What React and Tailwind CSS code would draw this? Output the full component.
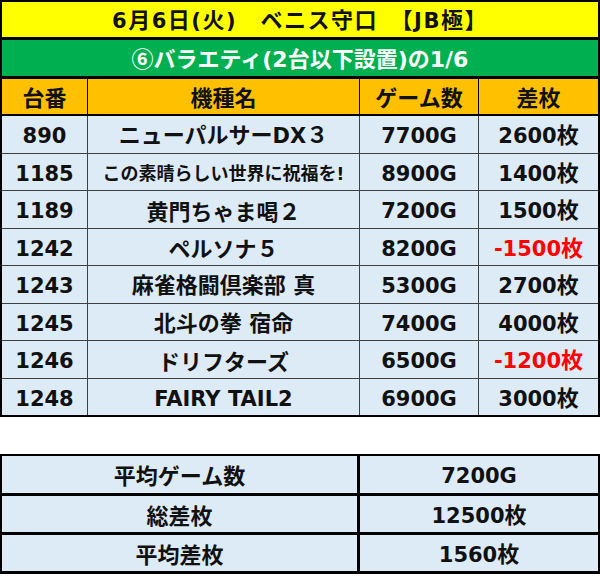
import React from 'react';

const rows = [
  { no: '890', name: 'ニューパルサーDX３', games: '7700G', diff: '2600枚' },
  { no: '1185', name: 'この素晴らしい世界に祝福を!', games: '8900G', diff: '1400枚', small: true },
  { no: '1189', name: '黄門ちゃま喝２', games: '7200G', diff: '1500枚' },
  { no: '1242', name: 'ペルソナ５', games: '8200G', diff: '-1500枚', minus: true },
  { no: '1243', name: '麻雀格闘倶楽部 真', games: '5300G', diff: '2700枚' },
  { no: '1245', name: '北斗の拳 宿命', games: '7400G', diff: '4000枚' },
  { no: '1246', name: 'ドリフターズ', games: '6500G', diff: '-1200枚', minus: true },
  { no: '1248', name: 'FAIRY TAIL2', games: '6900G', diff: '3000枚' },
];

const summary = [
  { label: '平均ゲーム数', value: '7200G' },
  { label: '総差枚', value: '12500枚' },
  { label: '平均差枚', value: '1560枚' },
];

// latin runs get a Verdana-like face, the rest stays on the CJK font
function Mixed({ text, latin = 'text-[21px]' }) {
  const parts = text.split(/([\x20-\x7e]+)/).filter(Boolean);
  return (
    <span className="leading-none">
      {parts.map((p, i) =>
        /^[\x20-\x7e]+$/.test(p) ? (
          <span key={i} className={`${latin} font-[family-name:"DejaVu_Sans",sans-serif]`}>{p}</span>
        ) : (
          <span key={i}>{p}</span>
        )
      )}
    </span>
  );
}

export default function App() {
  return (
    <div className='w-[600px] h-[576px] bg-white font-bold text-[22px] text-[#111] font-[family-name:"Noto_Sans_CJK_JP",sans-serif]'>
      {/* main table */}
      <div className="w-[600px] border-x-2 border-t-2 border-b-2 border-black">
        <div className="h-[35px] bg-[#ffff00] flex items-center justify-center whitespace-pre tracking-[1.5px]">
          <Mixed text="6月6日(火)　ベニス守口　【JB極】" />
        </div>
        <div className="h-[3px] bg-black" />
        <div className="h-[36px] bg-[#00b050] flex items-center justify-center text-white">
          <Mixed text="⑥バラエティ(2台以下設置)の1/6" latin="text-[22px]" />
        </div>
        <div className="h-[3px] bg-black" />
        <div className="h-[35px] grid grid-cols-[85px_271px_118px_1fr] gap-x-px bg-black">
          <div className="bg-[#ffc000] flex items-center justify-center">台番</div>
          <div className="bg-[#ffc000] flex items-center justify-center">機種名</div>
          <div className="bg-[#ffc000] flex items-center justify-center">ゲーム数</div>
          <div className="bg-[#ffc000] flex items-center justify-center">差枚</div>
        </div>
        <div className="h-[2px] bg-black" />
        <div className="flex flex-col gap-px bg-[#404040]">
          {rows.map((r, i) => (
            <div
              key={r.no}
              className={`grid grid-cols-[85px_271px_118px_1fr] gap-x-px ${i % 2 === 0 ? 'h-[37px]' : 'h-[36px]'}`}
            >
              <div className="bg-[#ddebf7] flex items-center justify-center">
                <Mixed text={r.no} />
              </div>
              <div className="bg-[#ddebf7] flex items-center justify-center whitespace-pre">
                {r.small ? (
                  <span className="text-[18px]"><Mixed text={r.name} latin="text-[17px]" /></span>
                ) : (
                  <Mixed text={r.name} />
                )}
              </div>
              <div className="bg-[#ddebf7] flex items-center justify-center">
                <Mixed text={r.games} />
              </div>
              <div className={`bg-[#ddebf7] flex items-center justify-center ${r.minus ? 'text-[#ff0000]' : ''}`}>
                <Mixed text={r.diff} />
              </div>
            </div>
          ))}
        </div>
      </div>

      {/* summary table */}
      <div className="mt-[37px] w-[600px] border-x-2 border-t-2 border-b-[3px] border-black flex flex-col gap-[3px] bg-black">
        {summary.map((s, i) => (
          <div key={s.label} className={`grid grid-cols-[355px_1fr] gap-x-[3px] ${i === 0 ? 'h-[37px]' : 'h-[36px]'}`}>
            <div className="bg-[#ddebf7] flex items-center justify-center">{s.label}</div>
            <div className="bg-[#ddebf7] flex items-center justify-center">
              <Mixed text={s.value} />
            </div>
          </div>
        ))}
      </div>
    </div>
  );
}
